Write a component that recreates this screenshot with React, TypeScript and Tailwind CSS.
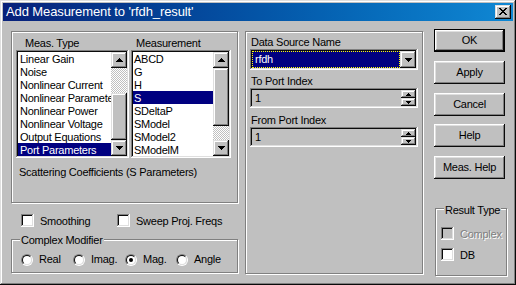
import React from "react";

const raisedBtn =
  "shadow-[inset_-1px_-1px_#0a0a0a,inset_1px_1px_#ffffff,inset_-2px_-2px_#808080,inset_2px_2px_#dfdfdf]";
const raisedScroll =
  "shadow-[inset_-1px_-1px_#0a0a0a,inset_1px_1px_#dfdfdf,inset_-2px_-2px_#808080,inset_2px_2px_#ffffff]";
const sunken =
  "shadow-[inset_-1px_-1px_#ffffff,inset_1px_1px_#808080,inset_-2px_-2px_#dfdfdf,inset_2px_2px_#0a0a0a]";
const groove = "border border-[#808080] shadow-[inset_1px_1px_#ffffff,1px_1px_#ffffff]";
const checker =
  "bg-[image:repeating-conic-gradient(#c0c0c0_0%_25%,#ffffff_0%_50%)] bg-[length:2px_2px]";

function Arrow({ dir, small }: { dir: "up" | "down"; small?: boolean }) {
  if (small) {
    return (
      <svg width="5" height="3" viewBox="0 0 5 3" shapeRendering="crispEdges">
        {dir === "up" ? (
          <path d="M2 0h1v1h1v1h1v1H0V2h1V1h1z" fill="#000" />
        ) : (
          <path d="M0 0h5v1H4v1H3v1H2V2H1V1H0z" fill="#000" />
        )}
      </svg>
    );
  }
  return (
    <svg width="7" height="4" viewBox="0 0 7 4" shapeRendering="crispEdges">
      {dir === "up" ? (
        <path d="M3 0h1v1h1v1h1v1h1v1H0V3h1V2h1V1h1z" fill="#000" />
      ) : (
        <path d="M0 0h7v1H6v1H5v1H4v1H3V3H2V2H1V1H0z" fill="#000" />
      )}
    </svg>
  );
}

function ScrollBtn({ dir }: { dir: "up" | "down" }) {
  return (
    <div className={`w-[16px] h-[16px] bg-[#c0c0c0] flex items-center justify-center ${raisedScroll}`}>
      <Arrow dir={dir} />
    </div>
  );
}

function ListBox({
  items,
  selected,
  width,
  topTrack,
  thumb,
  textPad,
}: {
  items: string[];
  selected: number;
  width: string;
  topTrack: string;
  thumb: string;
  textPad: string;
}) {
  return (
    <div className={`${width} h-[108px] bg-white p-[2px] flex ${sunken}`}>
      <div className="flex-1 overflow-hidden flex flex-col">
        {items.map((it, i) => (
          <div
            key={it}
            className={`h-[13px] shrink-0 whitespace-nowrap leading-[15px] ${textPad} ${
              i === selected ? "bg-[#000080] text-white" : ""
            }`}
          >
            {it}
          </div>
        ))}
      </div>
      <div className="w-[16px] flex flex-col">
        <ScrollBtn dir="up" />
        <div className="flex-1 flex flex-col">
          <div className={`${topTrack} ${checker}`} />
          <div className={`${thumb} bg-[#c0c0c0] ${raisedScroll}`} />
          <div className={`flex-1 ${checker}`} />
        </div>
        <ScrollBtn dir="down" />
      </div>
    </div>
  );
}

function CheckBox({ disabled }: { disabled?: boolean }) {
  return (
    <div className={`w-[13px] h-[13px] shrink-0 ${disabled ? "bg-[#c0c0c0]" : "bg-white"} ${sunken}`} />
  );
}

function Radio({ checked }: { checked?: boolean }) {
  return (
    <div className="w-[12px] h-[12px] shrink-0 rounded-full border border-t-[#808080] border-l-[#808080] border-b-white border-r-white flex">
      <div className="flex-1 rounded-full border border-t-[#0a0a0a] border-l-[#0a0a0a] border-b-[#dfdfdf] border-r-[#dfdfdf] bg-white flex items-center justify-center">
        {checked && <div className="w-[4px] h-[4px] rounded-full bg-black" />}
      </div>
    </div>
  );
}

function Spinner() {
  return (
    <div className={`w-[168px] h-[20px] bg-[#c0c0c0] p-[2px] flex ${sunken}`}>
      <div className="flex-1 pl-[3px] flex items-center">1</div>
      <div className="w-[15px] flex flex-col ml-[1px]">
        <div className={`h-[8px] bg-[#c0c0c0] flex items-center justify-center ${raisedScroll}`}>
          <Arrow dir="up" small />
        </div>
        <div className={`h-[8px] bg-[#c0c0c0] flex items-center justify-center ${raisedScroll}`}>
          <Arrow dir="down" small />
        </div>
      </div>
    </div>
  );
}

function PushButton({ label, isDefault, className = "" }: { label: string; isDefault?: boolean; className?: string }) {
  if (isDefault) {
    return (
      <div className={`w-[71px] h-[23px] border border-black flex ${className}`}>
        <div className={`flex-1 flex items-center justify-center bg-[#c0c0c0] ${raisedBtn}`}>{label}</div>
      </div>
    );
  }
  return (
    <div className={`w-[71px] h-[23px] flex items-center justify-center bg-[#c0c0c0] ${raisedBtn} ${className}`}>
      {label}
    </div>
  );
}

export default function App() {
  const measTypes = [
    "Linear Gain",
    "Noise",
    "Nonlinear Current",
    "Nonlinear Parameters",
    "Nonlinear Power",
    "Nonlinear Voltage",
    "Output Equations",
    "Port Parameters",
  ];
  const measurements = ["ABCD", "G", "H", "S", "SDeltaP", "SModel", "SModel2", "SModelM"];

  return (
    <div className="w-[516px] h-[285px] bg-[#c0c0c0] p-[3px] overflow-hidden select-none font-['Liberation_Sans',Arial,sans-serif] text-[11px] leading-[13px] tracking-[-0.25px] text-black shadow-[inset_-1px_-1px_#0a0a0a,inset_1px_1px_#dfdfdf,inset_-2px_-2px_#808080,inset_2px_2px_#ffffff]">
      {/* Title bar */}
      <div className="h-[18px] flex items-center justify-between pl-[3px] pr-[2px] bg-linear-to-r from-[#08207a] to-[#1088d4]">
        <span className="text-white text-[13px] leading-[18px] tracking-[-0.1px]">
          Add Measurement to 'rfdh_result'
        </span>
        <div className={`w-[16px] h-[14px] bg-[#c0c0c0] flex items-center justify-center ${raisedScroll}`}>
          <svg width="8" height="7" viewBox="0 0 8 7" shapeRendering="crispEdges" className="mb-[1px]">
            <path
              d="M0 0h2v1h1v1h2V1h1V0h2v1H7v1H6v1H5v1h1v1h1v1h1v1H6V6H5V5H3v1H2v1H0V6h1V5h1V4h1V3H2V2H1V1H0z"
              fill="#000"
            />
          </svg>
        </div>
      </div>

      {/* Body */}
      <div className="flex pl-[8px]">
        {/* Left column */}
        <div className="w-[227px] mt-[10px] flex flex-col">
          <div className={`h-[172px] ${groove} flex flex-col pl-[4px] pt-[5px]`}>
            <div className="flex h-[13px]">
              <div className="w-[115px] pl-[9px]">Meas. Type</div>
              <div className="pl-[5px]">Measurement</div>
            </div>
            <div className="flex gap-[2px]">
              <ListBox
                items={measTypes}
                selected={7}
                width="w-[113px]"
                topTrack="h-[25px]"
                thumb="h-[47px]"
                textPad="pl-[2px]"
              />
              <ListBox
                items={measurements}
                selected={3}
                width="w-[100px]"
                topTrack="h-0"
                thumb="h-[58px]"
                textPad="pl-[1px]"
              />
            </div>
            <div className="mt-[8px] pl-[3px]">Scattering Coefficients (S Parameters)</div>
          </div>

          <div className="mt-[11px] flex h-[13px] pl-[10px]">
            <div className="w-[96px] flex items-start gap-[6px]">
              <CheckBox />
              <span className="mt-[1px]">Smoothing</span>
            </div>
            <div className="flex items-start gap-[6px]">
              <CheckBox />
              <span className="mt-[1px]">Sweep Proj. Freqs</span>
            </div>
          </div>

          <div className={`mt-[12px] h-[34px] relative ${groove} pl-[9px] pt-[13px]`}>
            <span className="absolute left-[8px] -top-[6px] px-[1px] bg-[#c0c0c0]">Complex Modifier</span>
            <div className="flex">
              {[
                ["Real", "w-[52px]", false],
                ["Imag.", "w-[52px]", false],
                ["Mag.", "w-[51px]", true],
                ["Angle", "", false],
              ].map(([l, w, c]) => (
                <div key={l as string} className={`${w} flex items-center gap-[6px]`}>
                  <Radio checked={c as boolean} />
                  <span>{l as string}</span>
                </div>
              ))}
            </div>
          </div>
        </div>

        {/* Middle group */}
        <div className={`ml-[7px] mt-[10px] w-[178px] h-[243px] ${groove} flex flex-col pl-[4px] pt-[4px]`}>
          <div className="pl-[1px] h-[13px]">Data Source Name</div>
          <div className={`w-[168px] h-[21px] bg-white p-[2px] flex ${sunken}`}>
            <div className="flex-1 bg-[#000080] border border-dotted border-[#ffff00] text-white pl-[2px] flex items-center">
              rfdh
            </div>
            <div className={`w-[16px] bg-[#c0c0c0] flex items-center justify-center ${raisedScroll}`}>
              <Arrow dir="down" />
            </div>
          </div>
          <div className="pl-[1px] h-[13px] mt-[5px]">To Port Index</div>
          <Spinner />
          <div className="pl-[1px] h-[13px] mt-[6px]">From Port Index</div>
          <Spinner />
        </div>

        {/* Right column */}
        <div className="ml-[11px] mt-[8px] w-[73px] flex flex-col">
          <PushButton label="OK" isDefault />
          <PushButton label="Apply" className="mt-[9px]" />
          <PushButton label="Cancel" className="mt-[9px]" />
          <PushButton label="Help" className="mt-[8px]" />
          <PushButton label="Meas. Help" className="mt-[9px]" />

          <div className={`mt-[29px] ml-[1px] w-[72px] h-[68px] relative ${groove} pl-[5px] pt-[18px] flex flex-col`}>
            <span className="absolute left-[8px] -top-[5px] px-[1px] bg-[#c0c0c0]">Result Type</span>
            <div className="flex items-start gap-[6px] h-[13px]">
              <CheckBox disabled />
              <span className="mt-[1px] text-[#808080] [text-shadow:1px_1px_0_#ffffff]">Complex</span>
            </div>
            <div className="flex items-start gap-[6px] h-[13px] mt-[8px]">
              <CheckBox />
              <span className="mt-[1px]">DB</span>
            </div>
          </div>
        </div>
      </div>
    </div>
  );
}
